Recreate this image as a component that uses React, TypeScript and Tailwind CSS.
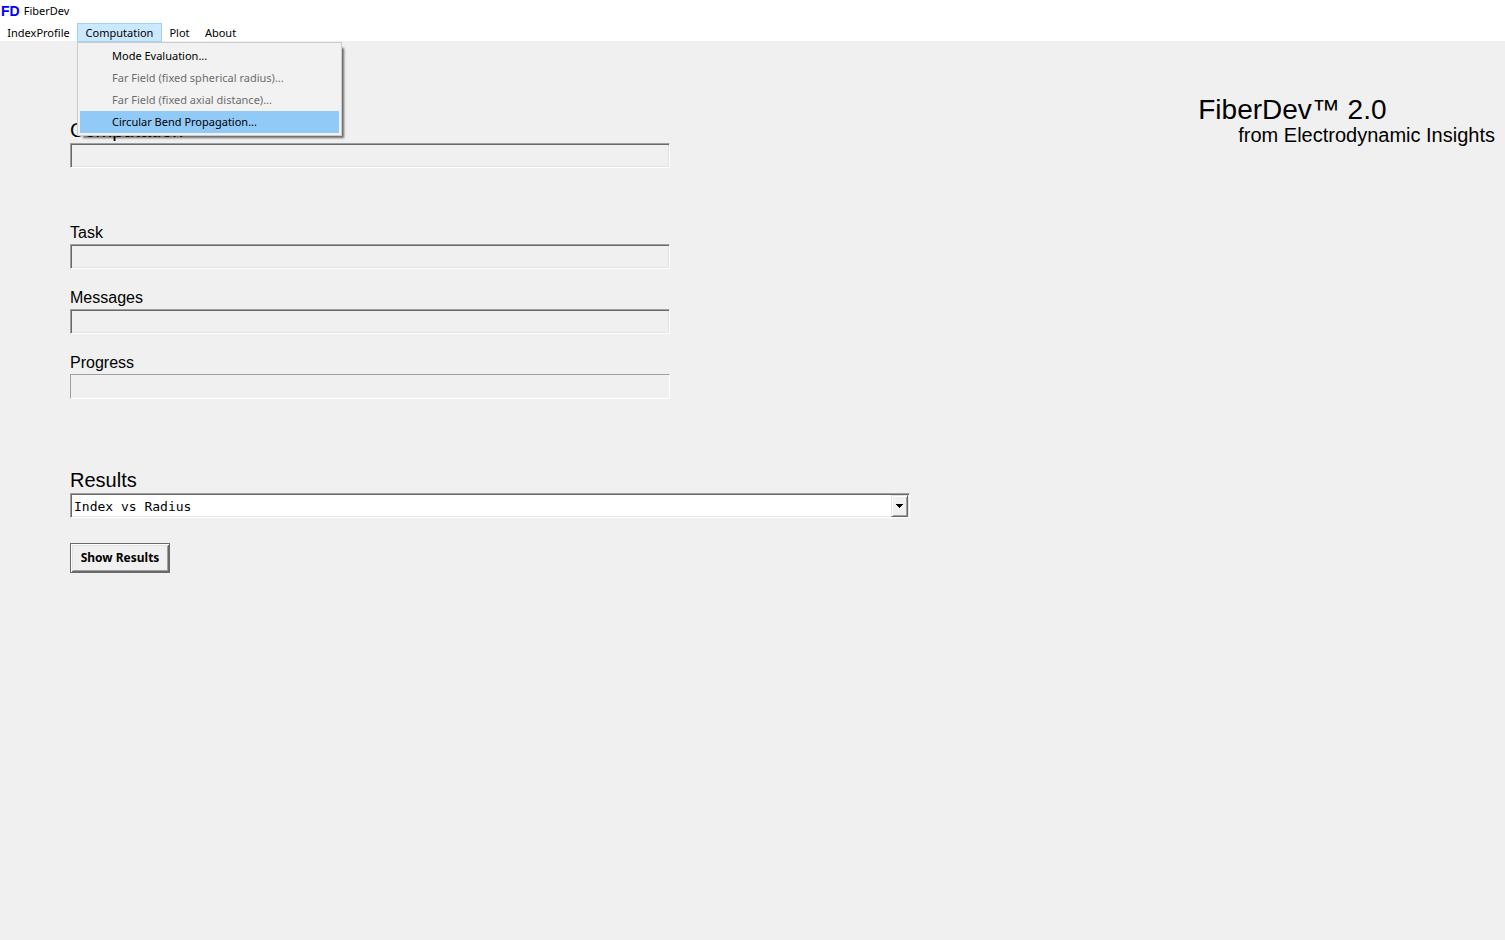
import React from "react";

type MenuEntry = { label: string; disabled?: boolean; active?: boolean };

const computationMenu: MenuEntry[] = [
  { label: "Mode Evaluation..." },
  { label: "Far Field (fixed spherical radius)...", disabled: true },
  { label: "Far Field (fixed axial distance)...", disabled: true },
  { label: "Circular Bend Propagation...", active: true },
];

const sunken =
  "border border-t-[#a0a0a0] border-l-[#a0a0a0] border-r-white border-b-white shadow-[inset_1px_1px_#696969,inset_-1px_-1px_#e3e3e3]";

const largeLabel = "pb-0.5 text-[20px] leading-[22px]";
const smallLabel = "pt-0.5 text-[16px] leading-[22px]";

function MenuButton({ label, width, open }: { label: string; width: string; open?: boolean }) {
  return (
    <button
      type="button"
      aria-haspopup="menu"
      aria-expanded={!!open}
      className={`h-[19px] border text-center leading-4 whitespace-nowrap ${width} ${
        open ? "border-[#99d1ff] bg-[#cce8ff]" : "border-transparent"
      }`}
    >
      {label}
    </button>
  );
}

function DropMenu() {
  return (
    <div
      role="menu"
      className="absolute top-[19px] left-0 z-10 w-[265px] border border-[#cccccc] bg-[#f2f2f2] p-0.5 shadow-[4px_4px_2px_-2px_#00000090]"
    >
      {computationMenu.map((m) => (
        <button
          key={m.label}
          type="button"
          role="menuitem"
          disabled={m.disabled}
          className={
            m.active
              ? "block h-[22px] w-full bg-[#91c9f7] pl-8 text-left"
              : "block h-[22px] w-full pl-8 text-left disabled:text-[#6d6d6d]"
          }
        >
          {m.label}
        </button>
      ))}
    </div>
  );
}

function Field({ id, label, large }: { id: string; label: string; large?: boolean }) {
  return (
    <div className="flex max-w-[600px] flex-col">
      <label htmlFor={id} className={large ? largeLabel : smallLabel}>
        {label}
      </label>
      <input id={id} readOnly className={`h-[25px] w-full bg-[#f0f0f0] px-1 outline-none ${sunken}`} />
    </div>
  );
}

export default function App() {
  return (
    <div className="flex min-h-screen flex-col bg-[#f0f0f0] font-['Liberation_Sans',Arial,sans-serif] text-black">
      <header className="bg-white font-['Noto_Sans',sans-serif] text-[11px]">
        <div className="flex h-[23px] items-center gap-1 pl-px">
          <span className="font-['Liberation_Sans',sans-serif] text-[14px] font-bold text-[#0000ff]">FD</span>
          <h1>FiberDev</h1>
        </div>
        <nav className="flex h-[18px]">
          <MenuButton label="IndexProfile" width="w-[77px]" />
          <div className="relative">
            <MenuButton label="Computation" width="w-[85px]" open />
            <DropMenu />
          </div>
          <MenuButton label="Plot" width="w-[35px]" />
          <MenuButton label="About" width="w-[47px]" />
        </nav>
      </header>

      <main className="flex items-start justify-between gap-8 pr-2.5 pl-[70px]">
        <div className="flex w-full max-w-[840px] flex-col pt-[78px]">
          <Field id="computation" label="Computation" large />
          <div className="mt-[52px] flex flex-col gap-4">
            <Field id="task" label="Task" />
            <Field id="messages" label="Messages" />
            <div className="flex max-w-[600px] flex-col">
              <span id="progress-label" className={smallLabel}>
                Progress
              </span>
              <div
                role="progressbar"
                aria-labelledby="progress-label"
                className="h-[25px] border border-t-[#a0a0a0] border-r-white border-b-white border-l-[#a0a0a0]"
              />
            </div>
          </div>

          <div className="mt-[70px] flex flex-col">
            <label htmlFor="results" className={largeLabel}>
              Results
            </label>
            <div className={`grid h-[25px] bg-white p-px ${sunken}`}>
              <select
                id="results"
                className="col-start-1 row-start-1 w-full appearance-none bg-transparent pt-0.5 pr-5 pl-0.5 font-['DejaVu_Sans_Mono',monospace] text-[13px] outline-none"
              >
                <option>Index vs Radius</option>
              </select>
              <span className="pointer-events-none col-start-1 row-start-1 flex w-[17px] items-center justify-center justify-self-end border border-t-[#e3e3e3] border-r-[#696969] border-b-[#696969] border-l-[#e3e3e3] bg-[#f0f0f0] shadow-[inset_1px_1px_#ffffff,inset_-1px_-1px_#a0a0a0]">
                <svg width="7" height="4" viewBox="0 0 7 4" shapeRendering="crispEdges" aria-hidden="true">
                  <path d="M0 0h7v1H0zM1 1h5v1H1zM2 2h3v1H2zM3 3h1v1H3z" />
                </svg>
              </span>
            </div>
          </div>

          <button
            type="button"
            className="mt-[25px] h-[30px] w-[100px] border border-[#696969] bg-[#f0f0f0] font-['Noto_Sans',sans-serif] text-[12px] font-bold shadow-[inset_1px_1px_#ffffff,inset_-1px_-1px_#696969,inset_2px_2px_#e3e3e3,inset_-2px_-2px_#a0a0a0]"
          >
            Show Results
          </button>
        </div>

        <div className="flex shrink-0 flex-col pt-[55px] whitespace-nowrap">
          <p className="text-[28px] leading-7">FiberDev™ 2.0</p>
          <p className="pl-10 text-[20px] leading-[22px]">from Electrodynamic Insights</p>
        </div>
      </main>
    </div>
  );
}
